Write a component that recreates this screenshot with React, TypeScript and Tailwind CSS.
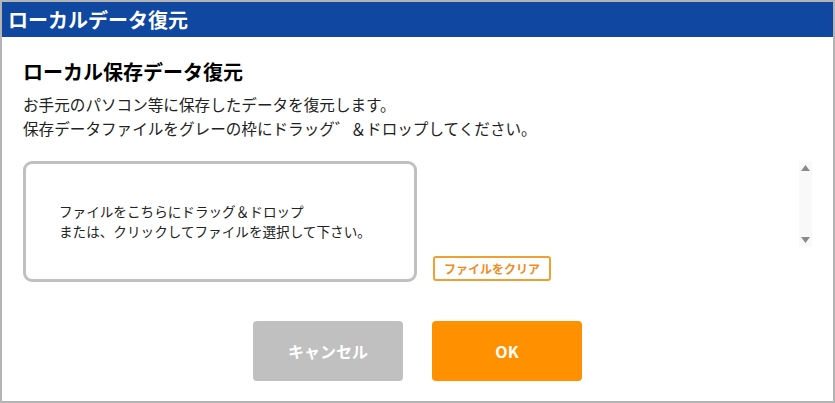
export default function App() {
  return (
    <div
      className="w-[835px] h-[403px] bg-white border-2 border-[#b4b4b4] flex flex-col overflow-hidden"
      style={{ fontFamily: '"Noto Sans CJK JP", "Noto Sans", sans-serif' }}
    >
      <div className="h-[35px] bg-[#0f47a1] text-white font-bold text-[20px] leading-[35px] pl-[6px]">
        ローカルデータ復元
      </div>
      <div className="flex flex-col px-[21px] pt-[22px]">
        <h2 className="text-[20px] font-bold leading-[26px] text-black">ローカル保存データ復元</h2>
        <div className="mt-[7px] text-[15.6px] leading-[24px] text-[#222]">
          <div>お手元のパソコン等に保存したデータを復元します。</div>
          <div>保存データファイルをグレーの枠にドラッグ゛＆ドロップしてください。</div>
        </div>
        <div className="mt-[21px] flex">
          <div className="w-[394px] h-[121px] border-[3px] border-[#c0c0c0] rounded-[9px] flex flex-col justify-center pl-[33px] text-[13.6px] leading-[19.7px] text-[#222]">
            <div>ファイルをこちらにドラッグ＆ドロップ</div>
            <div>または、クリックしてファイルを選択して下さい。</div>
          </div>
          <button className="self-end ml-[16px] mb-[1px] w-[118px] h-[25px] border-2 border-[#f0a030] rounded-[3px] text-[12px] font-bold text-[#f08c1e] leading-none">
            ファイルをクリア
          </button>
          <div className="flex-1" />
          <div className="w-[13px] h-[86px] bg-[#f9f9f9] flex flex-col items-center justify-between py-[4px]">
            <svg width="9" height="6" viewBox="0 0 9 6">
              <path d="M4.5 0 L9 6 L0 6 Z" fill="#8a8a8a" />
            </svg>
            <svg width="9" height="6" viewBox="0 0 9 6">
              <path d="M0 0 L9 0 L4.5 6 Z" fill="#8a8a8a" />
            </svg>
          </div>
        </div>
        <div className="mt-[39px] flex justify-center gap-[29px]">
          <button className="w-[150px] h-[60px] bg-[#c0c0c0] rounded-[4px] text-white font-bold text-[16px]">
            キャンセル
          </button>
          <button className="w-[150px] h-[60px] bg-[#ff9100] rounded-[4px] text-white font-bold text-[16px]">
            OK
          </button>
        </div>
      </div>
    </div>
  );
}
